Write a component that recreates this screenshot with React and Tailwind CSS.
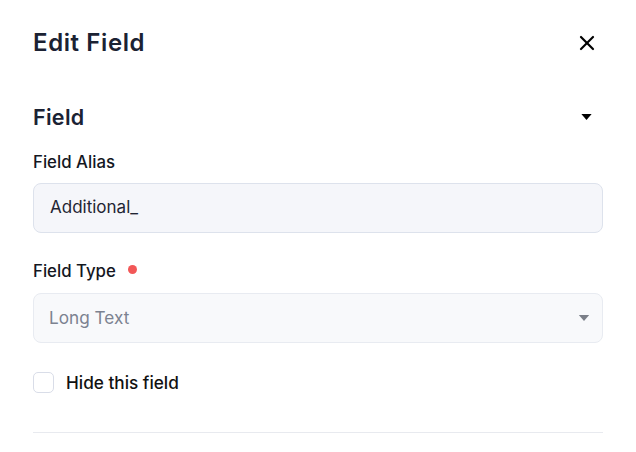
import { X } from 'lucide-react';

function Caret({ className }) {
  return (
    <svg viewBox="0 0 12 7" className={className} fill="currentColor">
      <path d="M0 0h12L6 7z" />
    </svg>
  );
}

export default function App() {
  return (
    <div className="h-[452px] w-[636px] bg-white px-[33px] font-['Inter',sans-serif] text-[#111827]">
      {/* header */}
      <div className="flex h-[86px] items-center justify-between">
        <h1 className="text-[24px] font-semibold tracking-[0.6px] text-[#1b2233]">Edit Field</h1>
        <button className="mr-[4px] text-black">
          <X size={24} strokeWidth={2.2} />
        </button>
      </div>

      {/* section */}
      <div className="flex h-[62px] items-center justify-between">
        <h2 className="text-[21.5px] font-semibold tracking-[0.3px] text-[#1b2233]">Field</h2>
        <Caret className="mr-[11px] h-[6px] w-[11px] text-black" />
      </div>

      <label className="mt-[2px] block text-[16.8px] font-medium leading-[24px] text-[#14171f]">Field Alias</label>
      <div className="mt-[9px] flex h-[50px] items-center rounded-[8px] border border-[#dde2ec] bg-[#f5f6fa] px-[16px] text-[17px] text-[#1f2533]">
        Additional_
      </div>

      <div className="mt-[26px] flex h-[24px] items-center gap-[12px]">
        <label className="text-[16.8px] font-medium leading-[24px] text-[#14171f]">Field Type</label>
        <span className="mb-[4px] h-[9px] w-[9px] rounded-full bg-[#f25757]" />
      </div>
      <div className="mt-[10px] flex h-[50px] items-center justify-between rounded-[8px] border border-[#e8ebf1] bg-[#f8f9fb] pl-[15px] pr-[12px] text-[17.2px] text-[#7c8290]">
        <span>Long Text</span>
        <Caret className="h-[6px] w-[12px] text-[#7b7f88]" />
      </div>

      <div className="mt-[29px] flex h-[21px] items-center gap-[12px]">
        <span className="h-[21px] w-[21px] rounded-[5px] border border-[#d9dde8] bg-white" />
        <span className="text-[17.2px] font-medium text-[#111]">Hide this field</span>
      </div>

      <div className="mt-[39px] h-px bg-[#e8eaef]" />
    </div>
  );
}
